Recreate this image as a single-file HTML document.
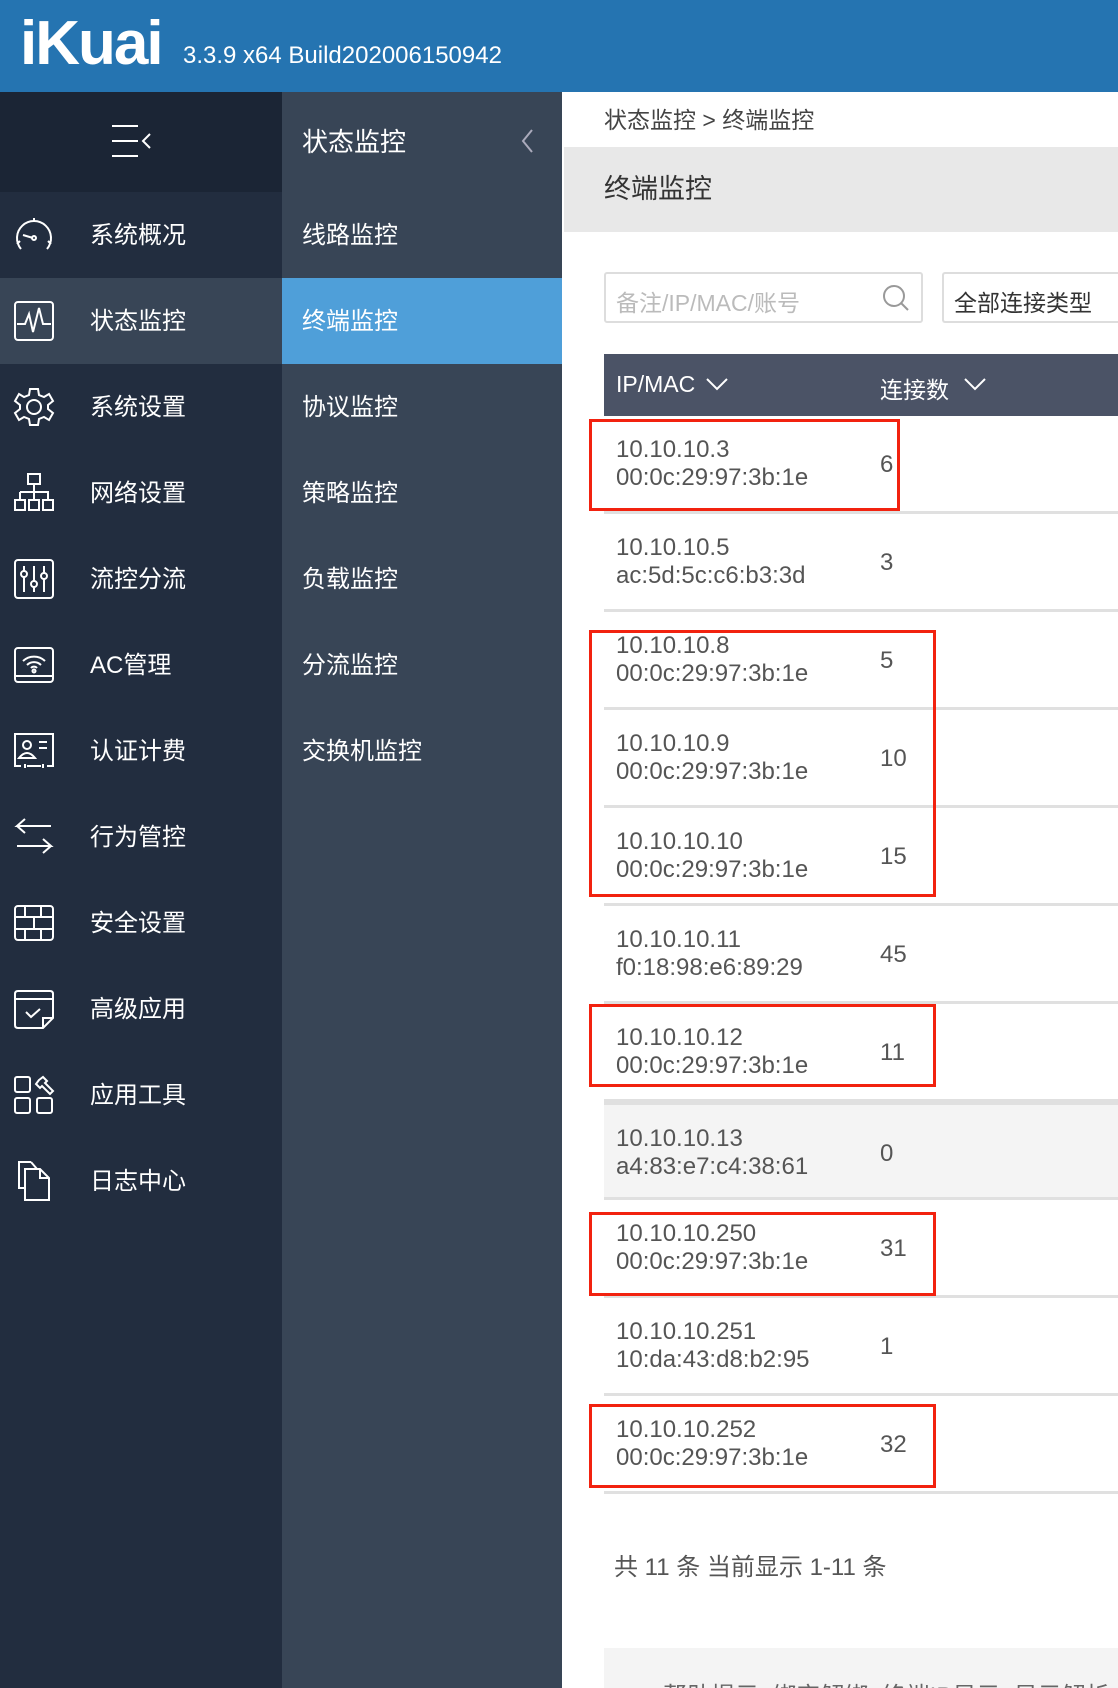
<!DOCTYPE html>
<html style="overflow:hidden;height:1688px"><head><meta charset="utf-8"><style>
*{margin:0;padding:0;box-sizing:border-box}
body{width:1118px;height:1688px;overflow:hidden;position:relative;font-family:"Liberation Sans","Noto Sans CJK SC",sans-serif;background:#fff}
.a{position:absolute}
#hd{left:0;top:0;width:1118px;height:92px;background:#2574b1}
#logo{left:20px;top:8px;font-size:62px;font-weight:bold;color:#fff;letter-spacing:-2px}
#ver{left:183px;top:42px;font-size:24px;color:#fff}
#c1{left:0;top:92px;width:282px;height:1596px;background:#222d3f}
#c1top{left:0;top:92px;width:282px;height:100px;background:#1b2535}
#c2{left:282px;top:92px;width:280px;height:1596px;background:#384556}
.r1{position:absolute;left:0;width:282px;height:86px;color:#fff;font-size:24px}
.r1 span{position:absolute;left:90px;top:23px}
.r1 svg{position:absolute;left:13px;top:22px}
.r2{position:absolute;left:282px;width:280px;height:86px;color:#fff;font-size:24px}
.r2 span{position:absolute;left:20px;top:23px}
.row{position:absolute;left:604px;width:514px;height:98px;border-bottom:3px solid #e0e0e0;color:#555;font-size:24px}
.row .ip{position:absolute;left:12px;top:20px;line-height:28px}
.row .n{position:absolute;left:276px;top:35px}
.box{position:absolute;border:3px solid #f2220f}
</style></head><body>
<div id="hd" class="a"></div>
<div id="logo" class="a">iKuai</div>
<div id="ver" class="a">3.3.9 x64 Build202006150942</div>
<div id="c1" class="a"></div>
<div id="c1top" class="a"></div>
<div id="c2" class="a"></div>
<svg class="a" style="left:104px;top:124px" width="50" height="36" viewBox="0 0 50 36" stroke="#fff" stroke-width="2" fill="none"><path d="M8 2H34M8 17H34M8 32H34M46 10L39 17L46 24"/></svg>
<div class="a" style="left:302px;top:122px;color:#fff;font-size:26px">状态监控</div>
<svg class="a" style="left:520px;top:128px" width="14" height="26" stroke="#aab" stroke-width="2" fill="none"><path d="M12 2L3 13L12 24"/></svg>

<div class="r1" style="top:192px"><svg width="42" height="42" viewBox="0 0 42 42" stroke="#fff" stroke-width="2" fill="none"><path d="M8 35A17 17 0 1 1 34 35M21 4V8M7 27L4 30M35 27L38 30M10 21L20 24"/><circle cx="21" cy="24" r="2"/></svg><span>系统概况</span></div>
<div class="r1" style="top:278px;background:#384556"><svg width="42" height="42" viewBox="0 0 42 42" stroke="#fff" stroke-width="2" fill="none"><rect x="2" y="2" width="38" height="38" rx="3"/><path d="M4 24H12L16 14L20 32L26 8L30 24H38"/></svg><span>状态监控</span></div>
<div class="r1" style="top:364px"><svg width="42" height="42" viewBox="0 0 42 42" stroke="#fff" stroke-width="2" fill="none"><path d="M17 3H25L26 9L31 11L36 8L40 15L35 19V23L40 27L36 34L31 31L26 33L25 39H17L16 33L11 31L6 34L2 27L7 23V19L2 15L6 8L11 11L16 9Z"/><circle cx="21" cy="21" r="7"/></svg><span>系统设置</span></div>
<div class="r1" style="top:450px"><svg width="42" height="42" viewBox="0 0 42 42" stroke="#fff" stroke-width="2" fill="none"><rect x="15" y="2" width="12" height="10"/><path d="M21 12V20M7 20H35V28M7 20V28M21 20V28"/><rect x="2" y="28" width="10" height="10"/><rect x="16" y="28" width="10" height="10"/><rect x="30" y="28" width="10" height="10"/></svg><span>网络设置</span></div>
<div class="r1" style="top:536px"><svg width="42" height="42" viewBox="0 0 42 42" stroke="#fff" stroke-width="2" fill="none"><rect x="2" y="2" width="38" height="38" rx="3"/><path d="M11 8V34M21 8V34M31 8V34"/><circle cx="11" cy="16" r="3" fill="#222d3f"/><circle cx="21" cy="26" r="3" fill="#222d3f"/><circle cx="31" cy="18" r="3" fill="#222d3f"/></svg><span>流控分流</span></div>
<div class="r1" style="top:622px"><svg width="42" height="42" viewBox="0 0 42 42" stroke="#fff" stroke-width="2" fill="none"><rect x="2" y="4" width="38" height="34" rx="3"/><path d="M2 32H40M10 17A16 16 0 0 1 32 17M14 21A10 10 0 0 1 28 21M18 24A4 4 0 0 1 24 24"/><circle cx="21" cy="27" r="1.5"/></svg><span>AC管理</span></div>
<div class="r1" style="top:708px"><svg width="42" height="42" viewBox="0 0 42 42" stroke="#fff" stroke-width="2" fill="none"><path d="M8 36H2V4H40V36H34M14 36H28M12 34V38M30 34V38"/><circle cx="14" cy="15" r="4"/><path d="M6 28Q14 18 22 28ZM26 12H34M26 18H34"/></svg><span>认证计费</span></div>
<div class="r1" style="top:794px"><svg width="42" height="42" viewBox="0 0 42 42" stroke="#fff" stroke-width="2" fill="none"><path d="M38 10H4L12 3M4 10L12 17M4 30H38L30 23M38 30L30 37"/></svg><span>行为管控</span></div>
<div class="r1" style="top:880px"><svg width="42" height="42" viewBox="0 0 42 42" stroke="#fff" stroke-width="2" fill="none"><rect x="2" y="4" width="38" height="34" rx="3"/><path d="M2 15H40M2 27H40M12 4V15M28 4V15M21 15V27M12 27V38M28 27V38"/></svg><span>安全设置</span></div>
<div class="r1" style="top:966px"><svg width="42" height="42" viewBox="0 0 42 42" stroke="#fff" stroke-width="2" fill="none"><path d="M30 40H5Q2 40 2 37V6Q2 3 5 3H37Q40 3 40 6V30ZM2 11H40M30 40V30H40M13 24L18 29L27 21"/></svg><span>高级应用</span></div>
<div class="r1" style="top:1052px"><svg width="42" height="42" viewBox="0 0 42 42" stroke="#fff" stroke-width="2" fill="none"><rect x="2" y="3" width="15" height="15" rx="2"/><rect x="2" y="24" width="15" height="15" rx="2"/><rect x="24" y="24" width="15" height="15" rx="2"/><path d="M26 6L30 3L34 7L32 9L40 17L37 20L29 12L27 14L23 10Z"/></svg><span>应用工具</span></div>
<div class="r1" style="top:1138px"><svg width="42" height="42" viewBox="0 0 42 42" stroke="#fff" stroke-width="2" fill="none"><path d="M18 2H6V28H12M18 2L24 9H12V40H36V18L27 9H24M27 9V18H36"/></svg><span>日志中心</span></div>

<div class="r2" style="top:192px"><span>线路监控</span></div>
<div class="r2" style="top:278px;background:#4f9fd9"><span>终端监控</span></div>
<div class="r2" style="top:364px"><span>协议监控</span></div>
<div class="r2" style="top:450px"><span>策略监控</span></div>
<div class="r2" style="top:536px"><span>负载监控</span></div>
<div class="r2" style="top:622px"><span>分流监控</span></div>
<div class="r2" style="top:708px"><span>交换机监控</span></div>

<div class="a" style="left:604px;top:101px;font-size:23px;color:#444">状态监控 &gt; 终端监控</div>
<div class="a" style="left:564px;top:147px;width:554px;height:85px;background:#e8e8e8"></div>
<div class="a" style="left:604px;top:167px;font-size:27px;color:#333">终端监控</div>
<div class="a" style="left:604px;top:272px;width:319px;height:51px;border:2px solid #ddd;border-radius:3px"></div>
<div class="a" style="left:616px;top:284px;font-size:23px;color:#bbb">备注/IP/MAC/账号</div>
<svg class="a" style="left:882px;top:284px" width="28" height="28" stroke="#999" stroke-width="2" fill="none"><circle cx="12" cy="12" r="10"/><path d="M19 19L26 26"/></svg>
<div class="a" style="left:942px;top:272px;width:176px;height:51px;border:2px solid #ddd;border-right:none;border-radius:3px 0 0 3px"></div>
<div class="a" style="left:954px;top:284px;font-size:23px;color:#333">全部连接类型</div>

<div class="a" style="left:604px;top:354px;width:514px;height:62px;background:#4b5366"></div>
<div class="a" style="left:616px;top:371px;font-size:23px;color:#fff">IP/MAC</div>
<svg class="a" style="left:705px;top:376px" width="24" height="16" stroke="#fff" stroke-width="2" fill="none"><path d="M2 3L12 13L22 3"/></svg>
<div class="a" style="left:880px;top:371px;font-size:23px;color:#fff">连接数</div>
<svg class="a" style="left:963px;top:376px" width="24" height="16" stroke="#fff" stroke-width="2" fill="none"><path d="M2 3L12 13L22 3"/></svg>

<div class="row" style="top:416px"><div class="ip">10.10.10.3<br>00:0c:29:97:3b:1e</div><div class="n">6</div></div>
<div class="row" style="top:514px"><div class="ip">10.10.10.5<br>ac:5d:5c:c6:b3:3d</div><div class="n">3</div></div>
<div class="row" style="top:612px"><div class="ip">10.10.10.8<br>00:0c:29:97:3b:1e</div><div class="n">5</div></div>
<div class="row" style="top:710px"><div class="ip">10.10.10.9<br>00:0c:29:97:3b:1e</div><div class="n">10</div></div>
<div class="row" style="top:808px"><div class="ip">10.10.10.10<br>00:0c:29:97:3b:1e</div><div class="n">15</div></div>
<div class="row" style="top:906px"><div class="ip">10.10.10.11<br>f0:18:98:e6:89:29</div><div class="n">45</div></div>
<div class="row" style="top:1004px"><div class="ip">10.10.10.12<br>00:0c:29:97:3b:1e</div><div class="n">11</div></div>
<div class="row" style="top:1102px;background:#f4f4f4;border-top:3px solid #e0e0e0"><div class="ip">10.10.10.13<br>a4:83:e7:c4:38:61</div><div class="n">0</div></div>
<div class="row" style="top:1200px"><div class="ip">10.10.10.250<br>00:0c:29:97:3b:1e</div><div class="n">31</div></div>
<div class="row" style="top:1298px"><div class="ip">10.10.10.251<br>10:da:43:d8:b2:95</div><div class="n">1</div></div>
<div class="row" style="top:1396px"><div class="ip">10.10.10.252<br>00:0c:29:97:3b:1e</div><div class="n">32</div></div>

<div class="box" style="left:589px;top:419px;width:311px;height:92px"></div>
<div class="box" style="left:589px;top:630px;width:347px;height:267px"></div>
<div class="box" style="left:589px;top:1004px;width:347px;height:83px"></div>
<div class="box" style="left:589px;top:1212px;width:347px;height:84px"></div>
<div class="box" style="left:589px;top:1404px;width:347px;height:84px"></div>

<div class="a" style="left:614px;top:1547px;font-size:24px;color:#555">共 11 条 当前显示 1-11 条</div>
<div class="a" style="left:604px;top:1648px;width:514px;height:40px;background:#f4f4f4;overflow:hidden">
<div class="a" style="left:59px;top:34px;font-size:24px;color:#666;white-space:nowrap;line-height:30px">帮助提示 &nbsp;绑定解绑 &nbsp;终端IP显示 &nbsp;显示解析</div>
</div>
</body></html>
